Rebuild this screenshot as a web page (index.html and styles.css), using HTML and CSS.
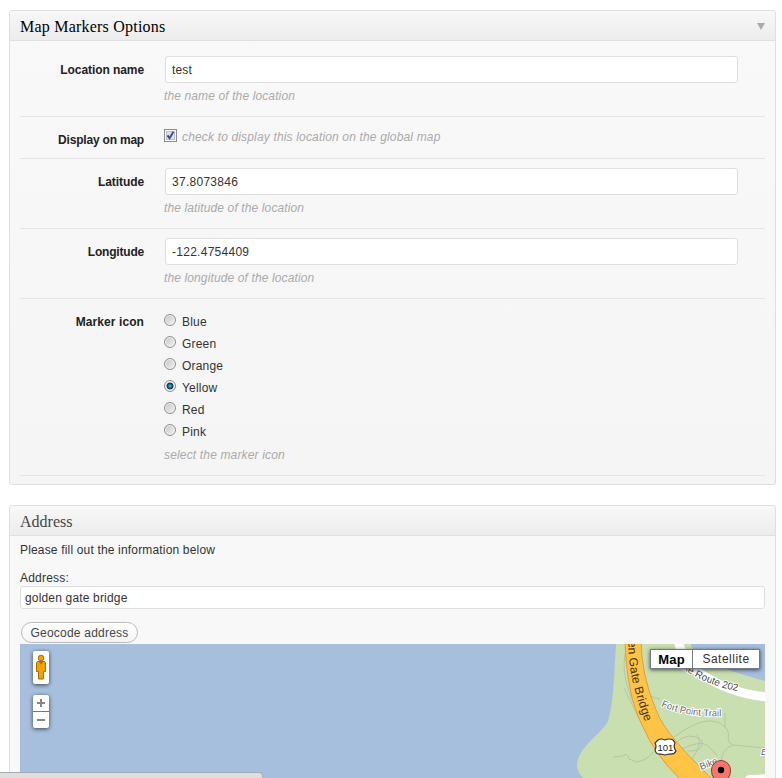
FILE: index.html
```
<!DOCTYPE html>
<html lang="en">
<head>
<meta charset="utf-8">
<title>Map Markers</title>
<link rel="stylesheet" href="styles.css">
</head>
<body>
<section class="panel options">
  <header class="panel-head"><h3 class="t-options">Map Markers Options</h3><span class="toggle"></span></header>
  <div class="rows">
    <div class="row">
      <label class="name" for="loc">Location name</label>
      <div class="field"><input id="loc" class="text" type="text" value="test"><p class="help">the name of the location</p></div>
    </div>
    <div class="row check-row">
      <label class="name tight">Display on map</label>
      <div class="field choice">
        <svg class="box" width="13" height="13" viewBox="0 0 13 13"><rect x=".5" y=".5" width="12" height="12" fill="#f8f8f8" stroke="#8b8d8f"/><rect x="2.5" y="2.5" width="8" height="8" fill="#dfe3e8" stroke="#bcc2c8"/><path d="M3.5 6.3 5.6 9.2 9.4 2.8" fill="none" stroke="#3c5292" stroke-width="2"/></svg>
        <span class="help wide">check to display this location on the global map</span>
      </div>
    </div>
    <div class="row">
      <label class="name" for="lat">Latitude</label>
      <div class="field"><input id="lat" class="text digits" type="text" value="37.8073846"><p class="help">the latitude of the location</p></div>
    </div>
    <div class="row">
      <label class="name tight" for="lng">Longitude</label>
      <div class="field"><input id="lng" class="text digits" type="text" value="-122.4754409"><p class="help">the longitude of the location</p></div>
    </div>
    <div class="row icon-row">
      <span class="name loose">Marker icon</span>
      <div class="field">
        <div class="choice"><i class="radio"></i><span>Blue</span></div>
        <div class="choice"><i class="radio"></i><span>Green</span></div>
        <div class="choice"><i class="radio"></i><span>Orange</span></div>
        <div class="choice"><i class="radio on"></i><span>Yellow</span></div>
        <div class="choice"><i class="radio"></i><span>Red</span></div>
        <div class="choice"><i class="radio"></i><span>Pink</span></div>
        <p class="help wide">select the marker icon</p>
      </div>
    </div>
  </div>
</section>

<section class="panel address">
  <header class="panel-head"><h3 class="t-address">Address</h3></header>
  <div class="address-body">
    <p class="intro">Please fill out the information below</p>
    <label class="addr-label" for="addr">Address:</label>
    <input id="addr" class="text addr" type="text" value="golden gate bridge">
    <button class="geocode" type="button">Geocode address</button>
    <div class="map">
      <svg class="tiles" width="745" height="134" viewBox="20 644 745 134">
        <defs>
          <path id="bridge-name" d="M628 634C628.500 665 630 682 648 730"/>
          <path id="route-name" d="M683 669C698 679 717 688 742 692"/>
          <path id="trail-name" d="M661 706Q686 718 728 716"/>
        </defs>
        <rect x="20" y="644" width="745" height="134" fill="#a5bfdd"/>
        <path d="M616 644C614 675 614 700 608 721C603 733 577 747 577 766Q578 773 583 778H765V681Q727 671 694 656L691 644Z" fill="#c9dfaf"/>
        <g fill="none" stroke="#b8c4a6">
          <path d="M625 654C622 675 627 690 642 722M624 688Q637 715 645 729M648 695Q655 698 660 699"/>
          <path d="M674 737Q709 711 725 727C733 735 723 740 733 745L765 748M725 727V713M733 745Q721 749 721 764"/>
          <path d="M613 757L623 756Q627 752 629 759L637 762Q648 760 653 752M675 743Q690 730 702 741Q704 752 687 751M680 750Q700 740 707 745L718 756M697 734Q704 744 691 760"/>
        </g>
        <path d="M678 640C681 656 690 667 701 674Q731 694 768 697" fill="none" stroke="#fff" stroke-width="9"/>
        <path d="M625 640C626 674 631 704 643 727Q655 755 681 780H713C689 756 665 733 656 710Q641 674 641 640Z" fill="#ffc345" stroke="#dba03c"/>
        <path d="M744 780Q746 774 754 775L768 774V780Z" fill="#fff"/>
        <text class="bridge-text"><textPath href="#bridge-name">den Gate Bridge</textPath></text>
        <text class="road-text"><textPath href="#route-name">ke Route 202</textPath></text>
        <text class="trail-text"><textPath href="#trail-name">Fort Point Trail</textPath></text>
        <text class="trail-text" transform="translate(701 770) rotate(-21)">Bike</text>
        <text class="trail-text edge" x="761" y="755">B</text>
        <path d="M658 740Q661 738 665 740Q669 738 673 740L675 743Q673 747 676 751Q674 755 669 754L665 755L661 754Q656 755 655 750Q657 746 655 743Z" fill="#fff" stroke="#333" stroke-width="1.2"/>
        <text class="shield-text" x="657.500" y="750.500">101</text>
        <path d="M711.500 770A9.500 9.500 0 0 1 730.500 770Q731 775 727 780H715Q711 775 711.500 770Z" fill="#f9766d" stroke="#8f3a36"/>
        <circle cx="721" cy="770" r="3.2" fill="#000"/>
      </svg>
      <div class="control pegman">
        <svg width="12" height="26" viewBox="0 0 12 26"><g fill="#f5a100" stroke="#a76b08"><path d="M2.500 7.500H9.500L10.500 9V17.500H8.500V25H3.500V17.500H1.500V9Z"/><circle cx="6" cy="4" r="2.800"/></g><path d="M3.500 7.500H8.500L6 10.500Z" fill="#c46d10"/></svg>
      </div>
      <div class="control zoom">
        <span><svg width="8" height="8"><path d="M0 4H8M4 0V8" stroke="#858585" stroke-width="2"/></svg></span>
        <span><svg width="8" height="8"><path d="M0 4H8" stroke="#858585" stroke-width="2"/></svg></span>
      </div>
      <div class="control types"><b>Map</b><span>Satellite</span></div>
    </div>
  </div>
</section>
<div class="status"></div>
</body>
</html>
```
FILE: styles.css
```
* { box-sizing: border-box; }
html, body { height: 778px; overflow: hidden; }
body { margin: 0; padding: 10px 6px 0 9px; background: #fff; color: #333; font: 12px/16px "Liberation Sans", Arial, sans-serif; }
h3, p { margin: 0; }
.panel { border: 1px solid #dfdfdf; border-radius: 3px; background: linear-gradient(#f9f9f9, #f5f5f5); }
.options { height: 475px; }
.address { height: 273px; margin-top: 20px; border-bottom: 0; border-radius: 3px 3px 0 0; background: #f8f8f8; }
.panel-head { display: flex; justify-content: space-between; height: 30px; padding: 0 10px; border-bottom: 1px solid #dfdfdf; background: linear-gradient(#f8f8f8, #ececec); border-radius: 2px 2px 0 0; }
.panel-head h3 { font: 16px/31px "Liberation Serif", Georgia, serif; color: #000; white-space: nowrap; }
.panel-head .t-options { letter-spacing: .22px; }
.panel-head .t-address { color: #464646; }
.toggle { width: 0; height: 0; margin: 12px 0 0; border: solid transparent; border-width: 7px 4px 0; border-top-color: #aaa; }
.rows { padding: 6px 10px 0; }
.row { display: grid; grid-template-columns: 124px 1fr; column-gap: 20px; height: 70px; padding-top: 9px; border-bottom: 1px solid #e5e5e5; }
.name { padding-top: 6px; text-align: right; font-weight: bold; color: #222; white-space: nowrap; letter-spacing: -.08px; }
.name.tight { letter-spacing: -.2px; }
.name.loose { letter-spacing: .08px; }
.text { display: block; width: 573px; height: 27px; margin: 0 0 0 1px; padding: 0 6px; border: 1px solid #dfdfdf; border-radius: 3px; background: #fff; color: #333; font: 12px/16px "Liberation Sans", Arial, sans-serif; letter-spacing: .17px; }
.text.digits { letter-spacing: .27px; }
.help { color: #aaa; font-style: italic; white-space: nowrap; letter-spacing: .12px; }
.help.wide { letter-spacing: .16px; }
.field p.help { margin-top: 5px; }
.check-row { height: 42px; }
.choice { display: flex; gap: 5px; }
.check-row .choice { padding-top: 3px; }
.icon-row { height: 177px; }
.icon-row .field { padding-top: 6px; }
.icon-row .choice { height: 22px; gap: 6px; letter-spacing: .2px; }
.icon-row p.help { margin-top: 1px; }
.radio { width: 12px; height: 12px; border: 1px solid #8e8f8f; border-radius: 50%; background: linear-gradient(135deg, #c4c4c4, #f4f4f4); box-shadow: inset 0 0 0 1px #f4f4f4; }
.radio.on { background: radial-gradient(circle at 5px 5px, #7cd0ee 0, #1c6890 1.7px, #10354e 3px, #e4e9eb 3.9px); }
.address-body { padding: 6px 10px 0; }
.intro { letter-spacing: .17px; }
.addr-label { display: block; width: 60px; margin-top: 12px; letter-spacing: .22px; }
.text.addr { width: 745px; height: 23px; margin: 0; padding: 0 4px; }
.geocode { display: block; width: 117px; height: 21px; margin: 13px 0 1px 1px; padding: 0; border: 1px solid #bbb; border-radius: 11px; background: linear-gradient(#fff, #f4f4f4); color: #464646; font: 12px/18px "Liberation Sans", Arial, sans-serif; letter-spacing: .22px; white-space: nowrap; }
.map { position: relative; width: 745px; height: 134px; overflow: hidden; }
.tiles { display: block; }
.tiles text { font-family: "Liberation Sans", Arial, sans-serif; fill: #555; }
.tiles .bridge-text { font-size: 12px; letter-spacing: .2px; fill: #4a3210; }
.tiles .road-text, .tiles .trail-text { font-size: 10px; stroke: #fff; stroke-width: 2px; paint-order: stroke; }
.tiles .road-text { fill: #444; }
.tiles .trail-text { font-size: 9.500px; fill: #68635f; }
.tiles .edge { font-style: italic; }
.tiles .shield-text { font-size: 9.5px; fill: #222; }
.control { position: absolute; background: #fff; border-radius: 2px; box-shadow: 0 1px 4px rgba(0,0,0,.65); }
.pegman { left: 13px; top: 7px; width: 16px; height: 33px; padding: 3px 2px; }
.zoom { left: 13px; top: 51px; width: 16px; height: 33px; }
.zoom span { display: flex; align-items: center; justify-content: center; height: 16px; }
.zoom span + span { height: 17px; border-top: 1px solid #717b87; }
.types { left: 630px; top: 5px; display: flex; width: 110px; height: 20px; border: 1px solid #717b87; border-radius: 0; color: #333; font-size: 12px; line-height: 19px; text-align: center; }
.types b { width: 42px; border-right: 1px solid #717b87; color: #000; font-size: 13px; letter-spacing: .2px; }
.types span { flex: 1; letter-spacing: .5px; }
.status { position: absolute; left: 0; top: 772px; width: 263px; height: 6px; border: solid #a5acb5; border-width: 1px 1px 0 0; border-radius: 0 4px 0 0; background: #dedede; }
```
